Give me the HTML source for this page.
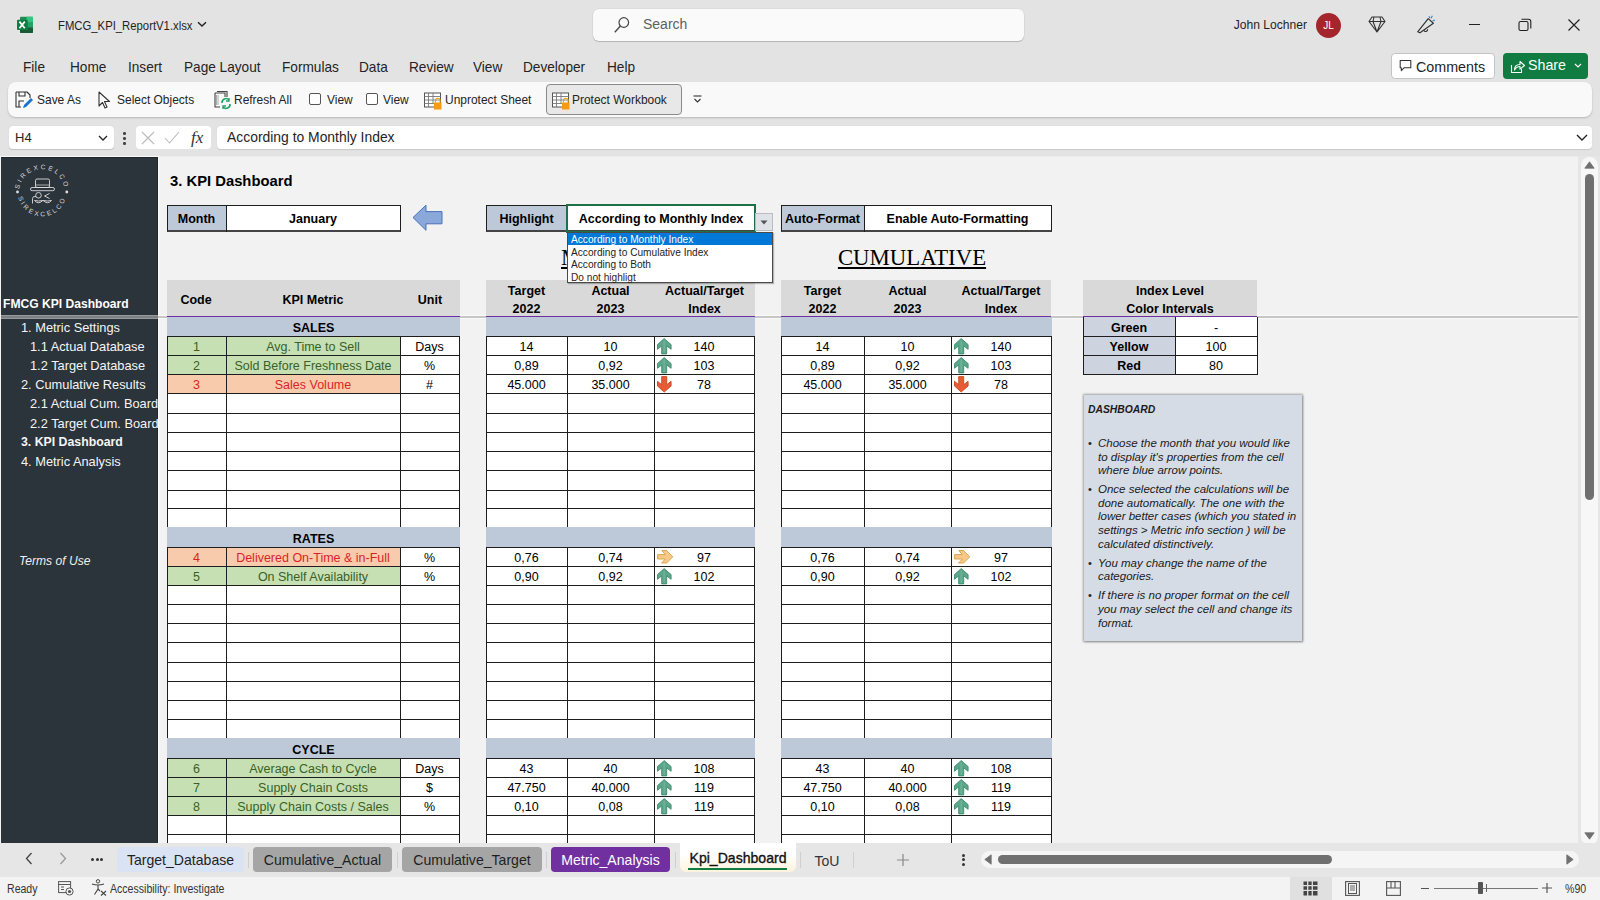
<!DOCTYPE html><html><head><meta charset="utf-8"><style>
*{margin:0;padding:0;box-sizing:border-box}
html,body{width:1600px;height:900px;overflow:hidden;background:#e3e3e3;font-family:"Liberation Sans",sans-serif;color:#1f1f1f}
.t{position:absolute;white-space:nowrap;overflow:visible}
svg{position:absolute;overflow:visible}
</style></head><body>
<svg style="left:16px;top:16px" width="18" height="18" viewBox="0 0 18 18">
<rect x="4" y="0.8" width="13" height="16.2" rx="1" fill="#1d8f55"/>
<rect x="10.5" y="0.8" width="6.5" height="5.6" fill="#33c481"/>
<rect x="10.5" y="6.4" width="6.5" height="5.2" fill="#21a366"/>
<rect x="4" y="11.6" width="13" height="5.4" rx="1" fill="#185c37"/>
<rect x="1" y="3.8" width="10.8" height="10.2" rx="1" fill="#107c41"/>
<path d="M3.4 5.6 L8.8 12.2 M8.8 5.6 L3.4 12.2" stroke="#fff" stroke-width="1.7"/>
</svg>
<div class="t" style="left:58px;top:16px;width:160px;height:20px;line-height:20px;text-align:left;font-size:13px;color:#1f1f1f;transform:scaleX(0.87);transform-origin:left">FMCG_KPI_ReportV1.xlsx</div>
<svg style="left:197px;top:21px" width="10" height="7" viewBox="0 0 10 7"><path d="M1 1.2 L5 5 L9 1.2" stroke="#222" stroke-width="1.4" fill="none"/></svg>
<div style="position:absolute;left:593px;top:9px;width:431px;height:32px;background:#fafafa;border-radius:6px;box-shadow:0 1px 1px rgba(0,0,0,0.18), 0 0 0 0.5px rgba(0,0,0,0.06)"></div>
<svg style="left:614px;top:16px" width="16" height="17" viewBox="0 0 16 17"><circle cx="9.8" cy="6.5" r="4.8" stroke="#444" stroke-width="1.2" fill="none"/><path d="M6.4 10 L0.8 16.2" stroke="#444" stroke-width="1.3"/></svg>
<div class="t" style="left:643px;top:14px;width:80px;height:20px;line-height:20px;text-align:left;font-size:14px;color:#5f5f5f">Search</div>
<div class="t" style="left:1200px;top:15px;width:107px;height:20px;line-height:20px;text-align:right;font-size:13px;color:#1f1f1f;transform:scaleX(0.93);transform-origin:right">John Lochner</div>
<div style="position:absolute;left:1316px;top:13px;width:25px;height:25px;border-radius:50%;background:#a4262c;color:#fff;font-size:10px;line-height:25px;text-align:center">JL</div>
<svg style="left:1368px;top:16px" width="18" height="17" viewBox="0 0 18 17"><path d="M4 1 H14 L17 5.5 L9 16 L1 5.5 Z M1 5.5 H17 M6 1 L5 5.5 L9 16 L13 5.5 L12 1" stroke="#333" stroke-width="1.1" fill="none" stroke-linejoin="round"/></svg>
<svg style="left:1415px;top:14px" width="22" height="22" viewBox="0 0 22 22">
<path d="M2.7 17.8 L13.2 4.6 L18.4 9.2 L5 18.8 Z" stroke="#333" stroke-width="1.2" fill="none" stroke-linejoin="round"/>
<path d="M8.8 16.3 A2 2 0 0 0 12.6 15.2" stroke="#333" stroke-width="1.1" fill="none"/>
<path d="M13.9 2.2 L15.1 4.2 M17.3 1.8 L16.2 4.3 M17.6 7 L19.8 6.1" stroke="#1b8ad6" stroke-width="1.1"/>
</svg>
<div style="position:absolute;left:1469px;top:24px;width:11px;height:1.2px;background:#222"></div>
<svg style="left:1518px;top:18px" width="14" height="14" viewBox="0 0 14 14"><rect x="1" y="3.5" width="9" height="9" rx="1.5" stroke="#222" stroke-width="1.1" fill="none"/><path d="M3.5 1.2 H10.5 Q12.8 1.2 12.8 3.5 V10.5" stroke="#222" stroke-width="1.1" fill="none"/></svg>
<svg style="left:1568px;top:19px" width="12" height="12" viewBox="0 0 12 12"><path d="M0.5 0.5 L11.5 11.5 M11.5 0.5 L0.5 11.5" stroke="#222" stroke-width="1.2"/></svg>
<div class="t" style="left:23px;top:57px;width:120px;height:20px;line-height:20px;text-align:left;font-size:14.5px;color:#242424;transform:scaleX(0.94);transform-origin:left">File</div>
<div class="t" style="left:70px;top:57px;width:120px;height:20px;line-height:20px;text-align:left;font-size:14.5px;color:#242424;transform:scaleX(0.94);transform-origin:left">Home</div>
<div class="t" style="left:128px;top:57px;width:120px;height:20px;line-height:20px;text-align:left;font-size:14.5px;color:#242424;transform:scaleX(0.94);transform-origin:left">Insert</div>
<div class="t" style="left:184px;top:57px;width:120px;height:20px;line-height:20px;text-align:left;font-size:14.5px;color:#242424;transform:scaleX(0.94);transform-origin:left">Page Layout</div>
<div class="t" style="left:282px;top:57px;width:120px;height:20px;line-height:20px;text-align:left;font-size:14.5px;color:#242424;transform:scaleX(0.94);transform-origin:left">Formulas</div>
<div class="t" style="left:359px;top:57px;width:120px;height:20px;line-height:20px;text-align:left;font-size:14.5px;color:#242424;transform:scaleX(0.94);transform-origin:left">Data</div>
<div class="t" style="left:409px;top:57px;width:120px;height:20px;line-height:20px;text-align:left;font-size:14.5px;color:#242424;transform:scaleX(0.94);transform-origin:left">Review</div>
<div class="t" style="left:473px;top:57px;width:120px;height:20px;line-height:20px;text-align:left;font-size:14.5px;color:#242424;transform:scaleX(0.94);transform-origin:left">View</div>
<div class="t" style="left:523px;top:57px;width:120px;height:20px;line-height:20px;text-align:left;font-size:14.5px;color:#242424;transform:scaleX(0.94);transform-origin:left">Developer</div>
<div class="t" style="left:607px;top:57px;width:120px;height:20px;line-height:20px;text-align:left;font-size:14.5px;color:#242424;transform:scaleX(0.94);transform-origin:left">Help</div>
<div style="position:absolute;left:1391px;top:53px;width:104px;height:26px;background:#fff;border:1px solid #c4c4c4;border-radius:4px"></div>
<svg style="left:1399px;top:59px" width="14" height="14" viewBox="0 0 14 14"><path d="M1.2 1.5 H11.8 V8.8 H5 L2.3 11.6 V8.8 H1.2 Z" stroke="#333" stroke-width="1.05" fill="none" stroke-linejoin="round"/></svg>
<div class="t" style="left:1416px;top:57px;width:80px;height:20px;line-height:20px;text-align:left;font-size:14.5px;color:#242424;transform:scaleX(0.985);transform-origin:left">Comments</div>
<div style="position:absolute;left:1503px;top:53px;width:85px;height:26px;background:#107c41;border-radius:4px"></div>
<svg style="left:1510px;top:58px" width="16" height="16" viewBox="0 0 16 16"><path d="M1.5 7 V14.5 H11.5 V11" stroke="#fff" stroke-width="1.1" fill="none"/><path d="M4.5 12 Q4.5 6.5 10 6.5 V3.5 L14.5 7.5 L10 11.2 V8.5 Q6.5 8.5 4.5 12 Z" stroke="#fff" stroke-width="1.1" fill="none" stroke-linejoin="round"/></svg>
<div class="t" style="left:1528px;top:55px;width:60px;height:20px;line-height:20px;text-align:left;font-size:15px;color:#fff;transform:scaleX(0.95);transform-origin:left">Share</div>
<svg style="left:1574px;top:63px" width="8" height="6" viewBox="0 0 8 6"><path d="M1 1 L4 4 L7 1" stroke="#fff" stroke-width="1.2" fill="none"/></svg>
<div style="position:absolute;left:8px;top:82px;width:1584px;height:35px;background:#f9f9f9;border-radius:8px;box-shadow:0 1px 2px rgba(0,0,0,0.2)"></div>
<svg style="left:15px;top:91px" width="19" height="18" viewBox="0 0 19 18">
<path d="M1 1 H12 L15 4 V7 M1 1 V16 H6" stroke="#333" stroke-width="1.1" fill="none" stroke-linejoin="round"/>
<path d="M4 1 V5 H10 V1 M4 16 V10 H9" stroke="#333" stroke-width="1.1" fill="none"/>
<path d="M8 17 L9 14 L16 7 L18 9 L11 16 Z" fill="#1a73d1"/>
</svg>
<div class="t" style="left:37px;top:90px;width:60px;height:20px;line-height:20px;text-align:left;font-size:13px;color:#242424;transform:scaleX(0.92);transform-origin:left">Save As</div>
<svg style="left:98px;top:91px" width="13" height="18" viewBox="0 0 13 18"><path d="M1 1 V15 L4.5 11.5 L7 17 L9 16 L6.5 10.5 H11.5 Z" stroke="#333" stroke-width="1.1" fill="none" stroke-linejoin="round"/></svg>
<div class="t" style="left:117px;top:90px;width:90px;height:20px;line-height:20px;text-align:left;font-size:13px;color:#242424;transform:scaleX(0.92);transform-origin:left">Select Objects</div>
<svg style="left:214px;top:91px" width="18" height="18" viewBox="0 0 18 18">
<path d="M1 2 V16 H6 M1 2 H11 V6 M3 0.5 H13 V6" stroke="#444" stroke-width="1.1" fill="none"/>
<path d="M2.5 4 V14 M4 4 V14" stroke="#999" stroke-width="0.8"/>
<path d="M8 12 A4 4 0 0 1 15 9 M16 13 A4 4 0 0 1 9 16" stroke="#21a366" stroke-width="1.6" fill="none"/>
<path d="M15 7 V10 H12 M9 18 V15 H12" stroke="#21a366" stroke-width="1.3" fill="none"/>
</svg>
<div class="t" style="left:234px;top:90px;width:70px;height:20px;line-height:20px;text-align:left;font-size:13px;color:#242424;transform:scaleX(0.92);transform-origin:left">Refresh All</div>
<div style="position:absolute;left:309px;top:93px;width:12px;height:12px;border:1px solid #555;border-radius:2px;background:#fff"></div>
<div class="t" style="left:327px;top:90px;width:40px;height:20px;line-height:20px;text-align:left;font-size:13px;color:#242424;transform:scaleX(0.92);transform-origin:left">View</div>
<div style="position:absolute;left:366px;top:93px;width:12px;height:12px;border:1px solid #555;border-radius:2px;background:#fff"></div>
<div class="t" style="left:383px;top:90px;width:40px;height:20px;line-height:20px;text-align:left;font-size:13px;color:#242424;transform:scaleX(0.92);transform-origin:left">View</div>
<svg style="left:424px;top:92px" width="18" height="18" viewBox="0 0 18 18">
<rect x="0.5" y="1" width="16" height="14" stroke="#555" stroke-width="1" fill="#fff"/>
<path d="M0.5 4.5 H16.5 M0.5 8 H16.5 M0.5 11.5 H10 M4.5 1 V15 M9 1 V11" stroke="#777" stroke-width="0.9"/>
<rect x="10" y="10.5" width="7.5" height="7" fill="#f39c12"/>
<path d="M11.5 10.5 V8.5 A2.2 2.2 0 0 1 16 8.5 V10.5" stroke="#f39c12" stroke-width="1.2" fill="none"/>
</svg>
<div class="t" style="left:445px;top:90px;width:110px;height:20px;line-height:20px;text-align:left;font-size:13px;color:#242424;transform:scaleX(0.92);transform-origin:left">Unprotect Sheet</div>
<div style="position:absolute;left:546px;top:84px;width:136px;height:31px;background:#e8e8e8;border:1px solid #8a8a8a;border-radius:4px"></div>
<svg style="left:552px;top:92px" width="18" height="18" viewBox="0 0 18 18">
<rect x="0.5" y="1" width="16" height="14" stroke="#555" stroke-width="1" fill="#fff"/>
<path d="M0.5 4.5 H16.5 M0.5 8 H16.5 M0.5 11.5 H10 M4.5 1 V15 M9 1 V11" stroke="#777" stroke-width="0.9"/>
<rect x="10" y="10.5" width="7.5" height="7" fill="#f39c12"/>
<path d="M11.5 10.5 V8.5 A2.2 2.2 0 0 1 16 8.5 V10.5" stroke="#f39c12" stroke-width="1.2" fill="none"/>
</svg>
<div class="t" style="left:572px;top:90px;width:110px;height:20px;line-height:20px;text-align:left;font-size:13px;color:#242424;transform:scaleX(0.92);transform-origin:left">Protect Workbook</div>
<svg style="left:693px;top:95px" width="9" height="10" viewBox="0 0 9 10"><path d="M0.5 1 H8.5" stroke="#333" stroke-width="1.1"/><path d="M1.5 4 L4.5 7 L7.5 4" stroke="#333" stroke-width="1.1" fill="none"/></svg>
<div style="position:absolute;left:9px;top:126px;width:105px;height:23px;background:#fff;border-radius:4px;box-shadow:0 0.5px 1px rgba(0,0,0,0.15)"></div>
<div class="t" style="left:15px;top:127px;width:40px;height:21px;line-height:21px;text-align:left;font-size:13px;color:#242424">H4</div>
<svg style="left:98px;top:135px" width="10" height="7" viewBox="0 0 10 7"><path d="M1 1 L5 5 L9 1" stroke="#222" stroke-width="1.3" fill="none"/></svg>
<div style="position:absolute;left:123px;top:132px;width:2.5px;height:2.5px;background:#444;border-radius:50%"></div>
<div style="position:absolute;left:123px;top:137px;width:2.5px;height:2.5px;background:#444;border-radius:50%"></div>
<div style="position:absolute;left:123px;top:142px;width:2.5px;height:2.5px;background:#444;border-radius:50%"></div>
<div style="position:absolute;left:136px;top:126px;width:75px;height:23px;background:#fff;border-radius:4px"></div>
<svg style="left:141px;top:131px" width="14" height="14" viewBox="0 0 14 14"><path d="M1 1 L13 13 M13 1 L1 13" stroke="#bbb" stroke-width="1.1"/></svg>
<svg style="left:164px;top:131px" width="16" height="13" viewBox="0 0 16 13"><path d="M1 7 L5.5 12 L15 1" stroke="#bbb" stroke-width="1.1" fill="none"/></svg>
<div class="t" style="left:191px;top:126px;width:20px;height:23px;line-height:23px;text-align:left;font-family:'Liberation Serif',serif;font-size:17px;color:#333"><i>fx</i></div>
<div style="position:absolute;left:217px;top:126px;width:1375px;height:23px;background:#fff;border-radius:4px;box-shadow:0 0.5px 1px rgba(0,0,0,0.12)"></div>
<div class="t" style="left:227px;top:127px;width:300px;height:21px;line-height:21px;text-align:left;font-size:13.9px;color:#242424">According to Monthly Index</div>
<svg style="left:1576px;top:134px" width="12" height="8" viewBox="0 0 12 8"><path d="M1 1 L6 6 L11 1" stroke="#222" stroke-width="1.4" fill="none"/></svg>
<div style="position:absolute;left:0px;top:156px;width:1578px;height:687px;background:#f2f2f2;border-top:1px solid #ececec"></div>
<div style="position:absolute;left:0px;top:156px;width:159px;height:1px;background:#fafafa"></div>
<div style="position:absolute;left:158px;top:157px;width:1px;height:686px;background:#fafafa"></div>
<div style="position:absolute;left:1px;top:157px;width:157px;height:686px;background:#2b333b;border-right:1px solid #1e252b;border-top:1px solid #1e252b"></div>
<svg style="left:13px;top:163px" width="58" height="58" viewBox="0 0 58 58">
<defs><path id="ct" d="M6.2 29 A22.8 22.8 0 0 1 51.8 29"/><path id="cb" d="M4.6 29 A24.4 24.4 0 0 0 53.4 29"/></defs>
<text font-family="Liberation Sans" font-size="6.6" fill="#dcdcdc" letter-spacing="2.3" text-anchor="middle"><textPath href="#ct" startOffset="50%">SIREXCELCO</textPath></text>
<text font-family="Liberation Sans" font-size="6.6" fill="#dcdcdc" letter-spacing="2.3" text-anchor="middle"><textPath href="#cb" startOffset="50%">SIREXCELCO</textPath></text>
<circle cx="4.5" cy="29" r="1.4" fill="#e0e0e0"/><circle cx="53.8" cy="29" r="1.4" fill="#e0e0e0"/>
<rect x="22.5" y="16" width="14" height="8.5" rx="1.5" stroke="#ddd" stroke-width="0.9" fill="none"/>
<path d="M23 22 H36" stroke="#ddd" stroke-width="0.7"/>
<rect x="17.5" y="24.5" width="24" height="3.2" rx="1.6" stroke="#ddd" stroke-width="0.9" fill="none"/>
<circle cx="25.5" cy="32.3" r="2.8" stroke="#ddd" stroke-width="0.9" fill="none"/>
<path d="M19.5 40.5 V35.5 Q19.5 33 23 33.5 M21.5 37.5 Q25.5 42 29.8 37.5 Q25.5 38.5 21.5 37.5 M30.2 37.5 Q34.5 42 38.5 37.5 Q34.5 38.5 30.2 37.5 M36.5 30.5 L31.5 33 L36.5 35.5" stroke="#ddd" stroke-width="0.9" fill="none"/>
</svg>
<div class="t" style="left:3px;top:295px;width:160px;height:19px;line-height:19px;text-align:left;color:#fff;font-size:12.1px;font-weight:bold">FMCG KPI Dashboard</div>
<div style="position:absolute;left:1px;top:317px;width:157px;height:19px;overflow:hidden">
<div class="t" style="left:20px;top:1px;width:200px;height:19px;line-height:19px;text-align:left;color:#f5f5f5;font-size:13px;transform:scaleX(0.985);transform-origin:left;">1. Metric Settings</div>
</div>
<div style="position:absolute;left:1px;top:336px;width:157px;height:19px;overflow:hidden">
<div class="t" style="left:29px;top:1px;width:200px;height:19px;line-height:19px;text-align:left;color:#f5f5f5;font-size:13px;transform:scaleX(0.985);transform-origin:left;">1.1 Actual Database</div>
</div>
<div style="position:absolute;left:1px;top:355px;width:157px;height:19px;overflow:hidden">
<div class="t" style="left:29px;top:1px;width:200px;height:19px;line-height:19px;text-align:left;color:#f5f5f5;font-size:13px;transform:scaleX(0.985);transform-origin:left;">1.2 Target Database</div>
</div>
<div style="position:absolute;left:1px;top:374px;width:157px;height:19px;overflow:hidden">
<div class="t" style="left:20px;top:1px;width:200px;height:19px;line-height:19px;text-align:left;color:#f5f5f5;font-size:13px;transform:scaleX(0.985);transform-origin:left;">2. Cumulative Results</div>
</div>
<div style="position:absolute;left:1px;top:393px;width:157px;height:20px;overflow:hidden">
<div class="t" style="left:29px;top:1px;width:200px;height:20px;line-height:20px;text-align:left;color:#f5f5f5;font-size:13px;transform:scaleX(0.985);transform-origin:left;">2.1 Actual Cum. Board</div>
</div>
<div style="position:absolute;left:1px;top:413px;width:157px;height:19px;overflow:hidden">
<div class="t" style="left:29px;top:1px;width:200px;height:19px;line-height:19px;text-align:left;color:#f5f5f5;font-size:13px;transform:scaleX(0.985);transform-origin:left;">2.2 Target Cum. Board</div>
</div>
<div style="position:absolute;left:1px;top:432px;width:157px;height:19px;overflow:hidden">
<div class="t" style="left:20px;top:1px;width:200px;height:19px;line-height:19px;text-align:left;color:#f5f5f5;font-size:13px;font-weight:bold;font-size:12.3px;">3. KPI Dashboard</div>
</div>
<div style="position:absolute;left:1px;top:451px;width:157px;height:19px;overflow:hidden">
<div class="t" style="left:20px;top:1px;width:200px;height:19px;line-height:19px;text-align:left;color:#f5f5f5;font-size:13px;transform:scaleX(0.985);transform-origin:left;">4. Metric Analysis</div>
</div>
<div class="t" style="left:19px;top:551px;width:120px;height:19px;line-height:19px;text-align:left;color:#f0f0f0;font-size:13px;transform:scaleX(0.93);transform-origin:left"><i>Terms of Use</i></div>
<div style="position:absolute;left:1px;top:315px;width:1577px;height:4px;border-top:1px solid rgba(255,255,255,0.5);border-bottom:1px solid rgba(255,255,255,0.5);background:rgba(173,173,173,0.64);background-clip:padding-box"></div>
<div class="t" style="left:170px;top:171px;width:200px;height:20px;line-height:20px;text-align:left;font-size:14.8px;font-weight:bold;color:#000">3. KPI Dashboard</div>
<div style="position:absolute;left:167px;top:205px;width:59px;height:27px;background:#bdc8d8"></div>
<div style="position:absolute;left:226px;top:205px;width:174px;height:27px;background:#fff"></div>
<div style="position:absolute;left:167px;top:205px;width:234px;height:27px;border:1px solid #1e1e1e;border-bottom:2px solid #444"></div>
<div style="position:absolute;left:226px;top:205px;width:1px;height:27px;background:#1e1e1e"></div>
<div class="t" style="left:167px;top:207px;width:59px;height:25px;line-height:25px;text-align:center;font-size:12.5px;font-weight:bold;color:#000;">Month</div>
<div class="t" style="left:226px;top:207px;width:174px;height:25px;line-height:25px;text-align:center;font-size:12.5px;font-weight:bold;color:#000;">January</div>
<svg style="left:412px;top:204px" width="32" height="28" viewBox="0 0 32 28"><path d="M1 13.5 L14 1.2 L14 7.6 L30 7.6 L30 19.8 L14 19.8 L14 26.3 Z" fill="#8aa8da" stroke="#4a70b8" stroke-width="1"/></svg>
<div style="position:absolute;left:486px;top:205px;width:81px;height:27px;background:#bdc8d8"></div>
<div style="position:absolute;left:567px;top:205px;width:188px;height:27px;background:#fff"></div>
<div style="position:absolute;left:486px;top:205px;width:270px;height:27px;border:1px solid #1e1e1e;border-bottom:2px solid #444"></div>
<div style="position:absolute;left:567px;top:205px;width:1px;height:27px;background:#1e1e1e"></div>
<div class="t" style="left:486px;top:207px;width:81px;height:25px;line-height:25px;text-align:center;font-size:12.5px;font-weight:bold;color:#000;">Highlight</div>
<div class="t" style="left:567px;top:207px;width:188px;height:25px;line-height:25px;text-align:center;font-size:12.5px;font-weight:bold;color:#000;">According to Monthly Index</div>
<div style="position:absolute;left:781px;top:205px;width:83px;height:27px;background:#bdc8d8"></div>
<div style="position:absolute;left:864px;top:205px;width:187px;height:27px;background:#fff"></div>
<div style="position:absolute;left:781px;top:205px;width:271px;height:27px;border:1px solid #1e1e1e;border-bottom:2px solid #444"></div>
<div style="position:absolute;left:864px;top:205px;width:1px;height:27px;background:#1e1e1e"></div>
<div class="t" style="left:781px;top:207px;width:83px;height:25px;line-height:25px;text-align:center;font-size:12.5px;font-weight:bold;color:#000;">Auto-Format</div>
<div class="t" style="left:864px;top:207px;width:187px;height:25px;line-height:25px;text-align:center;font-size:12.5px;font-weight:bold;color:#000;">Enable Auto-Formatting</div>
<div style="position:absolute;left:566px;top:204px;width:190px;height:29px;border:2px solid #1e7145"></div>
<div class="t" style="left:561px;top:244px;width:269px;height:28px;line-height:28px;text-align:left;font-family:'Liberation Serif',serif;font-size:22.8px;color:#000"><u>MONTHLY</u></div>
<div class="t" style="left:777px;top:244px;width:270px;height:28px;line-height:28px;text-align:center;font-family:'Liberation Serif',serif;font-size:22.8px;color:#000"><u>CUMULATIVE</u></div>
<div style="position:absolute;left:167px;top:280px;width:293px;height:36px;background:#d9d9d9"></div>
<div style="position:absolute;left:167px;top:316px;width:293px;height:1.4px;background:#7030a0"></div>
<div style="position:absolute;left:486px;top:280px;width:269px;height:36px;background:#d9d9d9"></div>
<div style="position:absolute;left:486px;top:316px;width:269px;height:1.4px;background:#7030a0"></div>
<div style="position:absolute;left:781px;top:280px;width:270px;height:36px;background:#d9d9d9"></div>
<div style="position:absolute;left:781px;top:316px;width:270px;height:1.4px;background:#7030a0"></div>
<div style="position:absolute;left:1083px;top:280px;width:174px;height:36px;background:#d9d9d9"></div>
<div style="position:absolute;left:1083px;top:316px;width:174px;height:1.4px;background:#7030a0"></div>
<div class="t" style="left:136px;top:290px;width:120px;height:20px;line-height:20px;text-align:center;font-size:12.5px;font-weight:bold;color:#000;">Code</div>
<div class="t" style="left:253px;top:290px;width:120px;height:20px;line-height:20px;text-align:center;font-size:12.5px;font-weight:bold;color:#000;">KPI Metric</div>
<div class="t" style="left:370px;top:290px;width:120px;height:20px;line-height:20px;text-align:center;font-size:12.5px;font-weight:bold;color:#000;">Unit</div>
<div class="t" style="left:486px;top:282px;width:81px;height:18px;line-height:18px;text-align:center;font-size:12.5px;font-weight:bold;color:#000;">Target</div>
<div class="t" style="left:486px;top:300px;width:81px;height:18px;line-height:18px;text-align:center;font-size:12.5px;font-weight:bold;color:#000;">2022</div>
<div class="t" style="left:567px;top:282px;width:87px;height:18px;line-height:18px;text-align:center;font-size:12.5px;font-weight:bold;color:#000;">Actual</div>
<div class="t" style="left:567px;top:300px;width:87px;height:18px;line-height:18px;text-align:center;font-size:12.5px;font-weight:bold;color:#000;">2023</div>
<div class="t" style="left:654px;top:282px;width:101px;height:18px;line-height:18px;text-align:center;font-size:12.5px;font-weight:bold;color:#000;">Actual/Target</div>
<div class="t" style="left:654px;top:300px;width:101px;height:18px;line-height:18px;text-align:center;font-size:12.5px;font-weight:bold;color:#000;">Index</div>
<div class="t" style="left:781px;top:282px;width:83px;height:18px;line-height:18px;text-align:center;font-size:12.5px;font-weight:bold;color:#000;">Target</div>
<div class="t" style="left:781px;top:300px;width:83px;height:18px;line-height:18px;text-align:center;font-size:12.5px;font-weight:bold;color:#000;">2022</div>
<div class="t" style="left:864px;top:282px;width:87px;height:18px;line-height:18px;text-align:center;font-size:12.5px;font-weight:bold;color:#000;">Actual</div>
<div class="t" style="left:864px;top:300px;width:87px;height:18px;line-height:18px;text-align:center;font-size:12.5px;font-weight:bold;color:#000;">2023</div>
<div class="t" style="left:951px;top:282px;width:100px;height:18px;line-height:18px;text-align:center;font-size:12.5px;font-weight:bold;color:#000;">Actual/Target</div>
<div class="t" style="left:951px;top:300px;width:100px;height:18px;line-height:18px;text-align:center;font-size:12.5px;font-weight:bold;color:#000;">Index</div>
<div class="t" style="left:1083px;top:282px;width:174px;height:18px;line-height:18px;text-align:center;font-size:12.5px;font-weight:bold;color:#000;">Index Level</div>
<div class="t" style="left:1083px;top:300px;width:174px;height:18px;line-height:18px;text-align:center;font-size:12.5px;font-weight:bold;color:#000;">Color Intervals</div>
<div style="position:absolute;left:167px;top:317px;width:293px;height:19px;background:#bdc8d8"></div>
<div style="position:absolute;left:486px;top:317px;width:269px;height:19px;background:#bdc8d8"></div>
<div style="position:absolute;left:781px;top:317px;width:271px;height:19px;background:#bdc8d8"></div>
<div class="t" style="left:167px;top:319px;width:293px;height:19px;line-height:19px;text-align:center;font-size:12.5px;font-weight:bold;color:#000;">SALES</div>
<div style="position:absolute;left:167px;top:336px;width:293px;height:191px;background:#fff"></div>
<div style="position:absolute;left:167px;top:336px;width:233px;height:19px;background:#c6e0b4"></div>
<div class="t" style="left:167px;top:338px;width:59px;height:19px;line-height:19px;text-align:center;font-size:12.5px;color:#3b5f25">1</div>
<div class="t" style="left:226px;top:338px;width:174px;height:19px;line-height:19px;text-align:center;font-size:12.5px;color:#3b5f25">Avg. Time to Sell</div>
<div class="t" style="left:400px;top:338px;width:59px;height:19px;line-height:19px;text-align:center;font-size:12.5px;color:#000">Days</div>
<div style="position:absolute;left:167px;top:355px;width:233px;height:19px;background:#c6e0b4"></div>
<div class="t" style="left:167px;top:357px;width:59px;height:19px;line-height:19px;text-align:center;font-size:12.5px;color:#3b5f25">2</div>
<div class="t" style="left:226px;top:357px;width:174px;height:19px;line-height:19px;text-align:center;font-size:12.5px;color:#3b5f25">Sold Before Freshness Date</div>
<div class="t" style="left:400px;top:357px;width:59px;height:19px;line-height:19px;text-align:center;font-size:12.5px;color:#000">%</div>
<div style="position:absolute;left:167px;top:374px;width:233px;height:19px;background:#f8cbad"></div>
<div class="t" style="left:167px;top:376px;width:59px;height:19px;line-height:19px;text-align:center;font-size:12.5px;color:#dc1f26">3</div>
<div class="t" style="left:226px;top:376px;width:174px;height:19px;line-height:19px;text-align:center;font-size:12.5px;color:#dc1f26">Sales Volume</div>
<div class="t" style="left:400px;top:376px;width:59px;height:19px;line-height:19px;text-align:center;font-size:12.5px;color:#000">#</div>
<div style="position:absolute;left:167px;top:336px;width:293px;height:1px;background:#1e1e1e"></div>
<div style="position:absolute;left:167px;top:355px;width:293px;height:1px;background:#1e1e1e"></div>
<div style="position:absolute;left:167px;top:374px;width:293px;height:1px;background:#1e1e1e"></div>
<div style="position:absolute;left:167px;top:393px;width:293px;height:1px;background:#1e1e1e"></div>
<div style="position:absolute;left:167px;top:413px;width:293px;height:1px;background:#1e1e1e"></div>
<div style="position:absolute;left:167px;top:432px;width:293px;height:1px;background:#1e1e1e"></div>
<div style="position:absolute;left:167px;top:451px;width:293px;height:1px;background:#1e1e1e"></div>
<div style="position:absolute;left:167px;top:470px;width:293px;height:1px;background:#1e1e1e"></div>
<div style="position:absolute;left:167px;top:490px;width:293px;height:1px;background:#1e1e1e"></div>
<div style="position:absolute;left:167px;top:508px;width:293px;height:1px;background:#1e1e1e"></div>
<div style="position:absolute;left:167px;top:527px;width:293px;height:1.4px;background:#7030a0"></div>
<div style="position:absolute;left:167px;top:336px;width:1px;height:191px;background:#1e1e1e"></div>
<div style="position:absolute;left:226px;top:336px;width:1px;height:191px;background:#1e1e1e"></div>
<div style="position:absolute;left:400px;top:336px;width:1px;height:191px;background:#1e1e1e"></div>
<div style="position:absolute;left:459px;top:336px;width:1px;height:191px;background:#1e1e1e"></div>
<div style="position:absolute;left:486px;top:336px;width:269px;height:191px;background:#fff"></div>
<div class="t" style="left:486px;top:338px;width:81px;height:19px;line-height:19px;text-align:center;font-size:12.5px;color:#000">14</div>
<div class="t" style="left:567px;top:338px;width:87px;height:19px;line-height:19px;text-align:center;font-size:12.5px;color:#000">10</div>
<div class="t" style="left:654px;top:338px;width:100px;height:19px;line-height:19px;text-align:center;font-size:12.5px;color:#000">140</div>
<svg style="left:657px;top:338px" width="15" height="17" viewBox="0 0 15 17"><path d="M7.2 0.6 L14.1 6.6 L14.1 11.3 L9.7 7.9 L9.7 15.9 L4.7 15.9 L4.7 7.9 L0.5 11.3 L0.5 6.6 Z" fill="#5da68c" stroke="#3d8c70" stroke-width="0.9" stroke-linejoin="round"/><path d="M7.2 2.5 V15" stroke="#7cc0a6" stroke-width="1.2" opacity="0.6"/></svg>
<div class="t" style="left:486px;top:357px;width:81px;height:19px;line-height:19px;text-align:center;font-size:12.5px;color:#000">0,89</div>
<div class="t" style="left:567px;top:357px;width:87px;height:19px;line-height:19px;text-align:center;font-size:12.5px;color:#000">0,92</div>
<div class="t" style="left:654px;top:357px;width:100px;height:19px;line-height:19px;text-align:center;font-size:12.5px;color:#000">103</div>
<svg style="left:657px;top:357px" width="15" height="17" viewBox="0 0 15 17"><path d="M7.2 0.6 L14.1 6.6 L14.1 11.3 L9.7 7.9 L9.7 15.9 L4.7 15.9 L4.7 7.9 L0.5 11.3 L0.5 6.6 Z" fill="#5da68c" stroke="#3d8c70" stroke-width="0.9" stroke-linejoin="round"/><path d="M7.2 2.5 V15" stroke="#7cc0a6" stroke-width="1.2" opacity="0.6"/></svg>
<div class="t" style="left:486px;top:376px;width:81px;height:19px;line-height:19px;text-align:center;font-size:12.5px;color:#000">45.000</div>
<div class="t" style="left:567px;top:376px;width:87px;height:19px;line-height:19px;text-align:center;font-size:12.5px;color:#000">35.000</div>
<div class="t" style="left:654px;top:376px;width:100px;height:19px;line-height:19px;text-align:center;font-size:12.5px;color:#000">78</div>
<svg style="left:657px;top:376px" width="15" height="17" viewBox="0 0 15 17"><path d="M7.2 16 L14.1 10 L14.1 5.3 L9.7 8.7 L9.7 0.6 L4.7 0.6 L4.7 8.7 L0.5 5.3 L0.5 10 Z" fill="#e65c35" stroke="#cc4520" stroke-width="0.9" stroke-linejoin="round"/></svg>
<div style="position:absolute;left:486px;top:336px;width:269px;height:1px;background:#1e1e1e"></div>
<div style="position:absolute;left:486px;top:355px;width:269px;height:1px;background:#1e1e1e"></div>
<div style="position:absolute;left:486px;top:374px;width:269px;height:1px;background:#1e1e1e"></div>
<div style="position:absolute;left:486px;top:393px;width:269px;height:1px;background:#1e1e1e"></div>
<div style="position:absolute;left:486px;top:413px;width:269px;height:1px;background:#1e1e1e"></div>
<div style="position:absolute;left:486px;top:432px;width:269px;height:1px;background:#1e1e1e"></div>
<div style="position:absolute;left:486px;top:451px;width:269px;height:1px;background:#1e1e1e"></div>
<div style="position:absolute;left:486px;top:470px;width:269px;height:1px;background:#1e1e1e"></div>
<div style="position:absolute;left:486px;top:490px;width:269px;height:1px;background:#1e1e1e"></div>
<div style="position:absolute;left:486px;top:508px;width:269px;height:1px;background:#1e1e1e"></div>
<div style="position:absolute;left:486px;top:527px;width:269px;height:1.4px;background:#7030a0"></div>
<div style="position:absolute;left:486px;top:336px;width:1px;height:191px;background:#1e1e1e"></div>
<div style="position:absolute;left:567px;top:336px;width:1px;height:191px;background:#1e1e1e"></div>
<div style="position:absolute;left:654px;top:336px;width:1px;height:191px;background:#1e1e1e"></div>
<div style="position:absolute;left:754px;top:336px;width:1px;height:191px;background:#1e1e1e"></div>
<div style="position:absolute;left:781px;top:336px;width:271px;height:191px;background:#fff"></div>
<div class="t" style="left:781px;top:338px;width:83px;height:19px;line-height:19px;text-align:center;font-size:12.5px;color:#000">14</div>
<div class="t" style="left:864px;top:338px;width:87px;height:19px;line-height:19px;text-align:center;font-size:12.5px;color:#000">10</div>
<div class="t" style="left:951px;top:338px;width:100px;height:19px;line-height:19px;text-align:center;font-size:12.5px;color:#000">140</div>
<svg style="left:954px;top:338px" width="15" height="17" viewBox="0 0 15 17"><path d="M7.2 0.6 L14.1 6.6 L14.1 11.3 L9.7 7.9 L9.7 15.9 L4.7 15.9 L4.7 7.9 L0.5 11.3 L0.5 6.6 Z" fill="#5da68c" stroke="#3d8c70" stroke-width="0.9" stroke-linejoin="round"/><path d="M7.2 2.5 V15" stroke="#7cc0a6" stroke-width="1.2" opacity="0.6"/></svg>
<div class="t" style="left:781px;top:357px;width:83px;height:19px;line-height:19px;text-align:center;font-size:12.5px;color:#000">0,89</div>
<div class="t" style="left:864px;top:357px;width:87px;height:19px;line-height:19px;text-align:center;font-size:12.5px;color:#000">0,92</div>
<div class="t" style="left:951px;top:357px;width:100px;height:19px;line-height:19px;text-align:center;font-size:12.5px;color:#000">103</div>
<svg style="left:954px;top:357px" width="15" height="17" viewBox="0 0 15 17"><path d="M7.2 0.6 L14.1 6.6 L14.1 11.3 L9.7 7.9 L9.7 15.9 L4.7 15.9 L4.7 7.9 L0.5 11.3 L0.5 6.6 Z" fill="#5da68c" stroke="#3d8c70" stroke-width="0.9" stroke-linejoin="round"/><path d="M7.2 2.5 V15" stroke="#7cc0a6" stroke-width="1.2" opacity="0.6"/></svg>
<div class="t" style="left:781px;top:376px;width:83px;height:19px;line-height:19px;text-align:center;font-size:12.5px;color:#000">45.000</div>
<div class="t" style="left:864px;top:376px;width:87px;height:19px;line-height:19px;text-align:center;font-size:12.5px;color:#000">35.000</div>
<div class="t" style="left:951px;top:376px;width:100px;height:19px;line-height:19px;text-align:center;font-size:12.5px;color:#000">78</div>
<svg style="left:954px;top:376px" width="15" height="17" viewBox="0 0 15 17"><path d="M7.2 16 L14.1 10 L14.1 5.3 L9.7 8.7 L9.7 0.6 L4.7 0.6 L4.7 8.7 L0.5 5.3 L0.5 10 Z" fill="#e65c35" stroke="#cc4520" stroke-width="0.9" stroke-linejoin="round"/></svg>
<div style="position:absolute;left:781px;top:336px;width:271px;height:1px;background:#1e1e1e"></div>
<div style="position:absolute;left:781px;top:355px;width:271px;height:1px;background:#1e1e1e"></div>
<div style="position:absolute;left:781px;top:374px;width:271px;height:1px;background:#1e1e1e"></div>
<div style="position:absolute;left:781px;top:393px;width:271px;height:1px;background:#1e1e1e"></div>
<div style="position:absolute;left:781px;top:413px;width:271px;height:1px;background:#1e1e1e"></div>
<div style="position:absolute;left:781px;top:432px;width:271px;height:1px;background:#1e1e1e"></div>
<div style="position:absolute;left:781px;top:451px;width:271px;height:1px;background:#1e1e1e"></div>
<div style="position:absolute;left:781px;top:470px;width:271px;height:1px;background:#1e1e1e"></div>
<div style="position:absolute;left:781px;top:490px;width:271px;height:1px;background:#1e1e1e"></div>
<div style="position:absolute;left:781px;top:508px;width:271px;height:1px;background:#1e1e1e"></div>
<div style="position:absolute;left:781px;top:527px;width:271px;height:1.4px;background:#7030a0"></div>
<div style="position:absolute;left:781px;top:336px;width:1px;height:191px;background:#1e1e1e"></div>
<div style="position:absolute;left:864px;top:336px;width:1px;height:191px;background:#1e1e1e"></div>
<div style="position:absolute;left:951px;top:336px;width:1px;height:191px;background:#1e1e1e"></div>
<div style="position:absolute;left:1051px;top:336px;width:1px;height:191px;background:#1e1e1e"></div>
<div style="position:absolute;left:167px;top:527px;width:293px;height:20px;background:#bdc8d8"></div>
<div style="position:absolute;left:486px;top:527px;width:269px;height:20px;background:#bdc8d8"></div>
<div style="position:absolute;left:781px;top:527px;width:271px;height:20px;background:#bdc8d8"></div>
<div class="t" style="left:167px;top:529px;width:293px;height:20px;line-height:20px;text-align:center;font-size:12.5px;font-weight:bold;color:#000;">RATES</div>
<div style="position:absolute;left:167px;top:547px;width:293px;height:191px;background:#fff"></div>
<div style="position:absolute;left:167px;top:547px;width:233px;height:19px;background:#f8cbad"></div>
<div class="t" style="left:167px;top:549px;width:59px;height:19px;line-height:19px;text-align:center;font-size:12.5px;color:#dc1f26">4</div>
<div class="t" style="left:226px;top:549px;width:174px;height:19px;line-height:19px;text-align:center;font-size:12.5px;color:#dc1f26">Delivered On-Time &amp; in-Full</div>
<div class="t" style="left:400px;top:549px;width:59px;height:19px;line-height:19px;text-align:center;font-size:12.5px;color:#000">%</div>
<div style="position:absolute;left:167px;top:566px;width:233px;height:19px;background:#c6e0b4"></div>
<div class="t" style="left:167px;top:568px;width:59px;height:19px;line-height:19px;text-align:center;font-size:12.5px;color:#3b5f25">5</div>
<div class="t" style="left:226px;top:568px;width:174px;height:19px;line-height:19px;text-align:center;font-size:12.5px;color:#3b5f25">On Shelf Availability</div>
<div class="t" style="left:400px;top:568px;width:59px;height:19px;line-height:19px;text-align:center;font-size:12.5px;color:#000">%</div>
<div style="position:absolute;left:167px;top:547px;width:293px;height:1px;background:#1e1e1e"></div>
<div style="position:absolute;left:167px;top:566px;width:293px;height:1px;background:#1e1e1e"></div>
<div style="position:absolute;left:167px;top:585px;width:293px;height:1px;background:#1e1e1e"></div>
<div style="position:absolute;left:167px;top:604px;width:293px;height:1px;background:#1e1e1e"></div>
<div style="position:absolute;left:167px;top:623px;width:293px;height:1px;background:#1e1e1e"></div>
<div style="position:absolute;left:167px;top:642px;width:293px;height:1px;background:#1e1e1e"></div>
<div style="position:absolute;left:167px;top:662px;width:293px;height:1px;background:#1e1e1e"></div>
<div style="position:absolute;left:167px;top:681px;width:293px;height:1px;background:#1e1e1e"></div>
<div style="position:absolute;left:167px;top:700px;width:293px;height:1px;background:#1e1e1e"></div>
<div style="position:absolute;left:167px;top:719px;width:293px;height:1px;background:#1e1e1e"></div>
<div style="position:absolute;left:167px;top:738px;width:293px;height:1.4px;background:#7030a0"></div>
<div style="position:absolute;left:167px;top:547px;width:1px;height:191px;background:#1e1e1e"></div>
<div style="position:absolute;left:226px;top:547px;width:1px;height:191px;background:#1e1e1e"></div>
<div style="position:absolute;left:400px;top:547px;width:1px;height:191px;background:#1e1e1e"></div>
<div style="position:absolute;left:459px;top:547px;width:1px;height:191px;background:#1e1e1e"></div>
<div style="position:absolute;left:486px;top:547px;width:269px;height:191px;background:#fff"></div>
<div class="t" style="left:486px;top:549px;width:81px;height:19px;line-height:19px;text-align:center;font-size:12.5px;color:#000">0,76</div>
<div class="t" style="left:567px;top:549px;width:87px;height:19px;line-height:19px;text-align:center;font-size:12.5px;color:#000">0,74</div>
<div class="t" style="left:654px;top:549px;width:100px;height:19px;line-height:19px;text-align:center;font-size:12.5px;color:#000">97</div>
<svg style="left:657px;top:550px" width="17" height="15" viewBox="0 0 17 15"><path d="M15.8 6.8 L9.6 0.6 L4.8 0.6 L8.3 4.6 L0.6 4.6 L0.6 9 L8.3 9 L4.5 13 L9.6 13 Z" fill="#f6c98b" stroke="#d9a03e" stroke-width="0.9" stroke-linejoin="round"/></svg>
<div class="t" style="left:486px;top:568px;width:81px;height:19px;line-height:19px;text-align:center;font-size:12.5px;color:#000">0,90</div>
<div class="t" style="left:567px;top:568px;width:87px;height:19px;line-height:19px;text-align:center;font-size:12.5px;color:#000">0,92</div>
<div class="t" style="left:654px;top:568px;width:100px;height:19px;line-height:19px;text-align:center;font-size:12.5px;color:#000">102</div>
<svg style="left:657px;top:568px" width="15" height="17" viewBox="0 0 15 17"><path d="M7.2 0.6 L14.1 6.6 L14.1 11.3 L9.7 7.9 L9.7 15.9 L4.7 15.9 L4.7 7.9 L0.5 11.3 L0.5 6.6 Z" fill="#5da68c" stroke="#3d8c70" stroke-width="0.9" stroke-linejoin="round"/><path d="M7.2 2.5 V15" stroke="#7cc0a6" stroke-width="1.2" opacity="0.6"/></svg>
<div style="position:absolute;left:486px;top:547px;width:269px;height:1px;background:#1e1e1e"></div>
<div style="position:absolute;left:486px;top:566px;width:269px;height:1px;background:#1e1e1e"></div>
<div style="position:absolute;left:486px;top:585px;width:269px;height:1px;background:#1e1e1e"></div>
<div style="position:absolute;left:486px;top:604px;width:269px;height:1px;background:#1e1e1e"></div>
<div style="position:absolute;left:486px;top:623px;width:269px;height:1px;background:#1e1e1e"></div>
<div style="position:absolute;left:486px;top:642px;width:269px;height:1px;background:#1e1e1e"></div>
<div style="position:absolute;left:486px;top:662px;width:269px;height:1px;background:#1e1e1e"></div>
<div style="position:absolute;left:486px;top:681px;width:269px;height:1px;background:#1e1e1e"></div>
<div style="position:absolute;left:486px;top:700px;width:269px;height:1px;background:#1e1e1e"></div>
<div style="position:absolute;left:486px;top:719px;width:269px;height:1px;background:#1e1e1e"></div>
<div style="position:absolute;left:486px;top:738px;width:269px;height:1.4px;background:#7030a0"></div>
<div style="position:absolute;left:486px;top:547px;width:1px;height:191px;background:#1e1e1e"></div>
<div style="position:absolute;left:567px;top:547px;width:1px;height:191px;background:#1e1e1e"></div>
<div style="position:absolute;left:654px;top:547px;width:1px;height:191px;background:#1e1e1e"></div>
<div style="position:absolute;left:754px;top:547px;width:1px;height:191px;background:#1e1e1e"></div>
<div style="position:absolute;left:781px;top:547px;width:271px;height:191px;background:#fff"></div>
<div class="t" style="left:781px;top:549px;width:83px;height:19px;line-height:19px;text-align:center;font-size:12.5px;color:#000">0,76</div>
<div class="t" style="left:864px;top:549px;width:87px;height:19px;line-height:19px;text-align:center;font-size:12.5px;color:#000">0,74</div>
<div class="t" style="left:951px;top:549px;width:100px;height:19px;line-height:19px;text-align:center;font-size:12.5px;color:#000">97</div>
<svg style="left:954px;top:550px" width="17" height="15" viewBox="0 0 17 15"><path d="M15.8 6.8 L9.6 0.6 L4.8 0.6 L8.3 4.6 L0.6 4.6 L0.6 9 L8.3 9 L4.5 13 L9.6 13 Z" fill="#f6c98b" stroke="#d9a03e" stroke-width="0.9" stroke-linejoin="round"/></svg>
<div class="t" style="left:781px;top:568px;width:83px;height:19px;line-height:19px;text-align:center;font-size:12.5px;color:#000">0,90</div>
<div class="t" style="left:864px;top:568px;width:87px;height:19px;line-height:19px;text-align:center;font-size:12.5px;color:#000">0,92</div>
<div class="t" style="left:951px;top:568px;width:100px;height:19px;line-height:19px;text-align:center;font-size:12.5px;color:#000">102</div>
<svg style="left:954px;top:568px" width="15" height="17" viewBox="0 0 15 17"><path d="M7.2 0.6 L14.1 6.6 L14.1 11.3 L9.7 7.9 L9.7 15.9 L4.7 15.9 L4.7 7.9 L0.5 11.3 L0.5 6.6 Z" fill="#5da68c" stroke="#3d8c70" stroke-width="0.9" stroke-linejoin="round"/><path d="M7.2 2.5 V15" stroke="#7cc0a6" stroke-width="1.2" opacity="0.6"/></svg>
<div style="position:absolute;left:781px;top:547px;width:271px;height:1px;background:#1e1e1e"></div>
<div style="position:absolute;left:781px;top:566px;width:271px;height:1px;background:#1e1e1e"></div>
<div style="position:absolute;left:781px;top:585px;width:271px;height:1px;background:#1e1e1e"></div>
<div style="position:absolute;left:781px;top:604px;width:271px;height:1px;background:#1e1e1e"></div>
<div style="position:absolute;left:781px;top:623px;width:271px;height:1px;background:#1e1e1e"></div>
<div style="position:absolute;left:781px;top:642px;width:271px;height:1px;background:#1e1e1e"></div>
<div style="position:absolute;left:781px;top:662px;width:271px;height:1px;background:#1e1e1e"></div>
<div style="position:absolute;left:781px;top:681px;width:271px;height:1px;background:#1e1e1e"></div>
<div style="position:absolute;left:781px;top:700px;width:271px;height:1px;background:#1e1e1e"></div>
<div style="position:absolute;left:781px;top:719px;width:271px;height:1px;background:#1e1e1e"></div>
<div style="position:absolute;left:781px;top:738px;width:271px;height:1.4px;background:#7030a0"></div>
<div style="position:absolute;left:781px;top:547px;width:1px;height:191px;background:#1e1e1e"></div>
<div style="position:absolute;left:864px;top:547px;width:1px;height:191px;background:#1e1e1e"></div>
<div style="position:absolute;left:951px;top:547px;width:1px;height:191px;background:#1e1e1e"></div>
<div style="position:absolute;left:1051px;top:547px;width:1px;height:191px;background:#1e1e1e"></div>
<div style="position:absolute;left:167px;top:738px;width:293px;height:20px;background:#bdc8d8"></div>
<div style="position:absolute;left:486px;top:738px;width:269px;height:20px;background:#bdc8d8"></div>
<div style="position:absolute;left:781px;top:738px;width:271px;height:20px;background:#bdc8d8"></div>
<div class="t" style="left:167px;top:740px;width:293px;height:20px;line-height:20px;text-align:center;font-size:12.5px;font-weight:bold;color:#000;">CYCLE</div>
<div style="position:absolute;left:167px;top:758px;width:293px;height:85px;background:#fff"></div>
<div style="position:absolute;left:167px;top:758px;width:233px;height:19px;background:#c6e0b4"></div>
<div class="t" style="left:167px;top:760px;width:59px;height:19px;line-height:19px;text-align:center;font-size:12.5px;color:#3b5f25">6</div>
<div class="t" style="left:226px;top:760px;width:174px;height:19px;line-height:19px;text-align:center;font-size:12.5px;color:#3b5f25">Average Cash to Cycle</div>
<div class="t" style="left:400px;top:760px;width:59px;height:19px;line-height:19px;text-align:center;font-size:12.5px;color:#000">Days</div>
<div style="position:absolute;left:167px;top:777px;width:233px;height:19px;background:#c6e0b4"></div>
<div class="t" style="left:167px;top:779px;width:59px;height:19px;line-height:19px;text-align:center;font-size:12.5px;color:#3b5f25">7</div>
<div class="t" style="left:226px;top:779px;width:174px;height:19px;line-height:19px;text-align:center;font-size:12.5px;color:#3b5f25">Supply Chain Costs</div>
<div class="t" style="left:400px;top:779px;width:59px;height:19px;line-height:19px;text-align:center;font-size:12.5px;color:#000">$</div>
<div style="position:absolute;left:167px;top:796px;width:233px;height:19px;background:#c6e0b4"></div>
<div class="t" style="left:167px;top:798px;width:59px;height:19px;line-height:19px;text-align:center;font-size:12.5px;color:#3b5f25">8</div>
<div class="t" style="left:226px;top:798px;width:174px;height:19px;line-height:19px;text-align:center;font-size:12.5px;color:#3b5f25">Supply Chain Costs / Sales</div>
<div class="t" style="left:400px;top:798px;width:59px;height:19px;line-height:19px;text-align:center;font-size:12.5px;color:#000">%</div>
<div style="position:absolute;left:167px;top:758px;width:293px;height:1px;background:#1e1e1e"></div>
<div style="position:absolute;left:167px;top:777px;width:293px;height:1px;background:#1e1e1e"></div>
<div style="position:absolute;left:167px;top:796px;width:293px;height:1px;background:#1e1e1e"></div>
<div style="position:absolute;left:167px;top:815px;width:293px;height:1px;background:#1e1e1e"></div>
<div style="position:absolute;left:167px;top:834px;width:293px;height:1px;background:#1e1e1e"></div>
<div style="position:absolute;left:167px;top:758px;width:1px;height:85px;background:#1e1e1e"></div>
<div style="position:absolute;left:226px;top:758px;width:1px;height:85px;background:#1e1e1e"></div>
<div style="position:absolute;left:400px;top:758px;width:1px;height:85px;background:#1e1e1e"></div>
<div style="position:absolute;left:459px;top:758px;width:1px;height:85px;background:#1e1e1e"></div>
<div style="position:absolute;left:486px;top:758px;width:269px;height:85px;background:#fff"></div>
<div class="t" style="left:486px;top:760px;width:81px;height:19px;line-height:19px;text-align:center;font-size:12.5px;color:#000">43</div>
<div class="t" style="left:567px;top:760px;width:87px;height:19px;line-height:19px;text-align:center;font-size:12.5px;color:#000">40</div>
<div class="t" style="left:654px;top:760px;width:100px;height:19px;line-height:19px;text-align:center;font-size:12.5px;color:#000">108</div>
<svg style="left:657px;top:760px" width="15" height="17" viewBox="0 0 15 17"><path d="M7.2 0.6 L14.1 6.6 L14.1 11.3 L9.7 7.9 L9.7 15.9 L4.7 15.9 L4.7 7.9 L0.5 11.3 L0.5 6.6 Z" fill="#5da68c" stroke="#3d8c70" stroke-width="0.9" stroke-linejoin="round"/><path d="M7.2 2.5 V15" stroke="#7cc0a6" stroke-width="1.2" opacity="0.6"/></svg>
<div class="t" style="left:486px;top:779px;width:81px;height:19px;line-height:19px;text-align:center;font-size:12.5px;color:#000">47.750</div>
<div class="t" style="left:567px;top:779px;width:87px;height:19px;line-height:19px;text-align:center;font-size:12.5px;color:#000">40.000</div>
<div class="t" style="left:654px;top:779px;width:100px;height:19px;line-height:19px;text-align:center;font-size:12.5px;color:#000">119</div>
<svg style="left:657px;top:779px" width="15" height="17" viewBox="0 0 15 17"><path d="M7.2 0.6 L14.1 6.6 L14.1 11.3 L9.7 7.9 L9.7 15.9 L4.7 15.9 L4.7 7.9 L0.5 11.3 L0.5 6.6 Z" fill="#5da68c" stroke="#3d8c70" stroke-width="0.9" stroke-linejoin="round"/><path d="M7.2 2.5 V15" stroke="#7cc0a6" stroke-width="1.2" opacity="0.6"/></svg>
<div class="t" style="left:486px;top:798px;width:81px;height:19px;line-height:19px;text-align:center;font-size:12.5px;color:#000">0,10</div>
<div class="t" style="left:567px;top:798px;width:87px;height:19px;line-height:19px;text-align:center;font-size:12.5px;color:#000">0,08</div>
<div class="t" style="left:654px;top:798px;width:100px;height:19px;line-height:19px;text-align:center;font-size:12.5px;color:#000">119</div>
<svg style="left:657px;top:798px" width="15" height="17" viewBox="0 0 15 17"><path d="M7.2 0.6 L14.1 6.6 L14.1 11.3 L9.7 7.9 L9.7 15.9 L4.7 15.9 L4.7 7.9 L0.5 11.3 L0.5 6.6 Z" fill="#5da68c" stroke="#3d8c70" stroke-width="0.9" stroke-linejoin="round"/><path d="M7.2 2.5 V15" stroke="#7cc0a6" stroke-width="1.2" opacity="0.6"/></svg>
<div style="position:absolute;left:486px;top:758px;width:269px;height:1px;background:#1e1e1e"></div>
<div style="position:absolute;left:486px;top:777px;width:269px;height:1px;background:#1e1e1e"></div>
<div style="position:absolute;left:486px;top:796px;width:269px;height:1px;background:#1e1e1e"></div>
<div style="position:absolute;left:486px;top:815px;width:269px;height:1px;background:#1e1e1e"></div>
<div style="position:absolute;left:486px;top:834px;width:269px;height:1px;background:#1e1e1e"></div>
<div style="position:absolute;left:486px;top:758px;width:1px;height:85px;background:#1e1e1e"></div>
<div style="position:absolute;left:567px;top:758px;width:1px;height:85px;background:#1e1e1e"></div>
<div style="position:absolute;left:654px;top:758px;width:1px;height:85px;background:#1e1e1e"></div>
<div style="position:absolute;left:754px;top:758px;width:1px;height:85px;background:#1e1e1e"></div>
<div style="position:absolute;left:781px;top:758px;width:271px;height:85px;background:#fff"></div>
<div class="t" style="left:781px;top:760px;width:83px;height:19px;line-height:19px;text-align:center;font-size:12.5px;color:#000">43</div>
<div class="t" style="left:864px;top:760px;width:87px;height:19px;line-height:19px;text-align:center;font-size:12.5px;color:#000">40</div>
<div class="t" style="left:951px;top:760px;width:100px;height:19px;line-height:19px;text-align:center;font-size:12.5px;color:#000">108</div>
<svg style="left:954px;top:760px" width="15" height="17" viewBox="0 0 15 17"><path d="M7.2 0.6 L14.1 6.6 L14.1 11.3 L9.7 7.9 L9.7 15.9 L4.7 15.9 L4.7 7.9 L0.5 11.3 L0.5 6.6 Z" fill="#5da68c" stroke="#3d8c70" stroke-width="0.9" stroke-linejoin="round"/><path d="M7.2 2.5 V15" stroke="#7cc0a6" stroke-width="1.2" opacity="0.6"/></svg>
<div class="t" style="left:781px;top:779px;width:83px;height:19px;line-height:19px;text-align:center;font-size:12.5px;color:#000">47.750</div>
<div class="t" style="left:864px;top:779px;width:87px;height:19px;line-height:19px;text-align:center;font-size:12.5px;color:#000">40.000</div>
<div class="t" style="left:951px;top:779px;width:100px;height:19px;line-height:19px;text-align:center;font-size:12.5px;color:#000">119</div>
<svg style="left:954px;top:779px" width="15" height="17" viewBox="0 0 15 17"><path d="M7.2 0.6 L14.1 6.6 L14.1 11.3 L9.7 7.9 L9.7 15.9 L4.7 15.9 L4.7 7.9 L0.5 11.3 L0.5 6.6 Z" fill="#5da68c" stroke="#3d8c70" stroke-width="0.9" stroke-linejoin="round"/><path d="M7.2 2.5 V15" stroke="#7cc0a6" stroke-width="1.2" opacity="0.6"/></svg>
<div class="t" style="left:781px;top:798px;width:83px;height:19px;line-height:19px;text-align:center;font-size:12.5px;color:#000">0,10</div>
<div class="t" style="left:864px;top:798px;width:87px;height:19px;line-height:19px;text-align:center;font-size:12.5px;color:#000">0,08</div>
<div class="t" style="left:951px;top:798px;width:100px;height:19px;line-height:19px;text-align:center;font-size:12.5px;color:#000">119</div>
<svg style="left:954px;top:798px" width="15" height="17" viewBox="0 0 15 17"><path d="M7.2 0.6 L14.1 6.6 L14.1 11.3 L9.7 7.9 L9.7 15.9 L4.7 15.9 L4.7 7.9 L0.5 11.3 L0.5 6.6 Z" fill="#5da68c" stroke="#3d8c70" stroke-width="0.9" stroke-linejoin="round"/><path d="M7.2 2.5 V15" stroke="#7cc0a6" stroke-width="1.2" opacity="0.6"/></svg>
<div style="position:absolute;left:781px;top:758px;width:271px;height:1px;background:#1e1e1e"></div>
<div style="position:absolute;left:781px;top:777px;width:271px;height:1px;background:#1e1e1e"></div>
<div style="position:absolute;left:781px;top:796px;width:271px;height:1px;background:#1e1e1e"></div>
<div style="position:absolute;left:781px;top:815px;width:271px;height:1px;background:#1e1e1e"></div>
<div style="position:absolute;left:781px;top:834px;width:271px;height:1px;background:#1e1e1e"></div>
<div style="position:absolute;left:781px;top:758px;width:1px;height:85px;background:#1e1e1e"></div>
<div style="position:absolute;left:864px;top:758px;width:1px;height:85px;background:#1e1e1e"></div>
<div style="position:absolute;left:951px;top:758px;width:1px;height:85px;background:#1e1e1e"></div>
<div style="position:absolute;left:1051px;top:758px;width:1px;height:85px;background:#1e1e1e"></div>
<div style="position:absolute;left:1083px;top:317px;width:92px;height:19px;background:#cdd4df"></div>
<div style="position:absolute;left:1175px;top:317px;width:82px;height:19px;background:#fff"></div>
<div class="t" style="left:1083px;top:319px;width:92px;height:19px;line-height:19px;text-align:center;font-size:12.5px;font-weight:bold;color:#000;">Green</div>
<div class="t" style="left:1175px;top:319px;width:82px;height:19px;line-height:19px;text-align:center;font-size:12.5px;color:#000">-</div>
<div style="position:absolute;left:1083px;top:336px;width:92px;height:19px;background:#cdd4df"></div>
<div style="position:absolute;left:1175px;top:336px;width:82px;height:19px;background:#fff"></div>
<div class="t" style="left:1083px;top:338px;width:92px;height:19px;line-height:19px;text-align:center;font-size:12.5px;font-weight:bold;color:#000;">Yellow</div>
<div class="t" style="left:1175px;top:338px;width:82px;height:19px;line-height:19px;text-align:center;font-size:12.5px;color:#000">100</div>
<div style="position:absolute;left:1083px;top:355px;width:92px;height:19px;background:#cdd4df"></div>
<div style="position:absolute;left:1175px;top:355px;width:82px;height:19px;background:#fff"></div>
<div class="t" style="left:1083px;top:357px;width:92px;height:19px;line-height:19px;text-align:center;font-size:12.5px;font-weight:bold;color:#000;">Red</div>
<div class="t" style="left:1175px;top:357px;width:82px;height:19px;line-height:19px;text-align:center;font-size:12.5px;color:#000">80</div>
<div style="position:absolute;left:1083px;top:336px;width:175px;height:1px;background:#1e1e1e"></div>
<div style="position:absolute;left:1083px;top:355px;width:175px;height:1px;background:#1e1e1e"></div>
<div style="position:absolute;left:1083px;top:374px;width:175px;height:1px;background:#1e1e1e"></div>
<div style="position:absolute;left:1083px;top:317px;width:1px;height:58px;background:#1e1e1e"></div>
<div style="position:absolute;left:1175px;top:317px;width:1px;height:58px;background:#1e1e1e"></div>
<div style="position:absolute;left:1257px;top:317px;width:1px;height:58px;background:#1e1e1e"></div>
<div style="position:absolute;left:1084px;top:395px;width:218px;height:246px;background:#d6dce5;box-shadow:0 0 2px 1px rgba(0,0,0,0.32), 1px 1px 2px rgba(0,0,0,0.2)"></div>
<div class="t" style="left:1088px;top:402px;width:100px;height:14px;line-height:14px;text-align:left;font-size:11.5px;color:#1a1a1a;font-style:italic;font-weight:bold;transform:scaleX(0.9);transform-origin:left">DASHBOARD</div>
<div class="t" style="left:1088px;top:436px;width:10px;height:14px;line-height:14px;text-align:left;font-size:11px;color:#222">&#8226;</div>
<div class="t" style="left:1098px;top:436px;width:200px;height:14px;line-height:14px;text-align:left;font-size:11.5px;color:#1a1a1a;font-style:italic;">Choose the month that you would like</div>
<div class="t" style="left:1098px;top:450px;width:200px;height:14px;line-height:14px;text-align:left;font-size:11.5px;color:#1a1a1a;font-style:italic;">to display it's properties from the cell</div>
<div class="t" style="left:1098px;top:463px;width:200px;height:14px;line-height:14px;text-align:left;font-size:11.5px;color:#1a1a1a;font-style:italic;">where blue arrow points.</div>
<div class="t" style="left:1088px;top:482px;width:10px;height:14px;line-height:14px;text-align:left;font-size:11px;color:#222">&#8226;</div>
<div class="t" style="left:1098px;top:482px;width:200px;height:14px;line-height:14px;text-align:left;font-size:11.5px;color:#1a1a1a;font-style:italic;">Once selected the calculations will be</div>
<div class="t" style="left:1098px;top:496px;width:200px;height:14px;line-height:14px;text-align:left;font-size:11.5px;color:#1a1a1a;font-style:italic;">done automatically. The one with the</div>
<div class="t" style="left:1098px;top:509px;width:200px;height:14px;line-height:14px;text-align:left;font-size:11.5px;color:#1a1a1a;font-style:italic;">lower better cases (which you stated in</div>
<div class="t" style="left:1098px;top:523px;width:200px;height:14px;line-height:14px;text-align:left;font-size:11.5px;color:#1a1a1a;font-style:italic;">settings &gt; Metric info section ) will be</div>
<div class="t" style="left:1098px;top:537px;width:200px;height:14px;line-height:14px;text-align:left;font-size:11.5px;color:#1a1a1a;font-style:italic;">calculated distinctively.</div>
<div class="t" style="left:1088px;top:556px;width:10px;height:14px;line-height:14px;text-align:left;font-size:11px;color:#222">&#8226;</div>
<div class="t" style="left:1098px;top:556px;width:200px;height:14px;line-height:14px;text-align:left;font-size:11.5px;color:#1a1a1a;font-style:italic;">You may change the name of the</div>
<div class="t" style="left:1098px;top:569px;width:200px;height:14px;line-height:14px;text-align:left;font-size:11.5px;color:#1a1a1a;font-style:italic;">categories.</div>
<div class="t" style="left:1088px;top:588px;width:10px;height:14px;line-height:14px;text-align:left;font-size:11px;color:#222">&#8226;</div>
<div class="t" style="left:1098px;top:588px;width:200px;height:14px;line-height:14px;text-align:left;font-size:11.5px;color:#1a1a1a;font-style:italic;">If there is no proper format on the cell</div>
<div class="t" style="left:1098px;top:602px;width:200px;height:14px;line-height:14px;text-align:left;font-size:11.5px;color:#1a1a1a;font-style:italic;">you may select the cell and change its</div>
<div class="t" style="left:1098px;top:616px;width:200px;height:14px;line-height:14px;text-align:left;font-size:11.5px;color:#1a1a1a;font-style:italic;">format.</div>
<div style="position:absolute;left:755px;top:213px;width:18px;height:18px;background:#dfe2e6;border:1px solid #b9bcc0"></div>
<svg style="left:760px;top:220px" width="8" height="5" viewBox="0 0 8 5"><path d="M0.5 0.5 H7.5 L4 4.5 Z" fill="#555"/></svg>
<div style="position:absolute;left:567px;top:232px;width:206px;height:51px;background:#fff;border:1px solid #4a4a4a;box-shadow:1px 1px 1px rgba(0,0,0,0.25)"></div>
<div style="position:absolute;left:568px;top:233px;width:204px;height:12px;background:#0078d7"></div>
<div class="t" style="left:571px;top:233px;width:200px;height:12px;line-height:12px;text-align:left;font-size:10.5px;transform:scaleX(0.965);transform-origin:left;color:#fff">According to Monthly Index</div>
<div class="t" style="left:571px;top:246px;width:200px;height:12px;line-height:12px;text-align:left;font-size:10.5px;transform:scaleX(0.965);transform-origin:left;color:#222">According to Cumulative Index</div>
<div class="t" style="left:571px;top:258px;width:200px;height:12px;line-height:12px;text-align:left;font-size:10.5px;transform:scaleX(0.965);transform-origin:left;color:#222">According to Both</div>
<div class="t" style="left:571px;top:271px;width:200px;height:12px;line-height:12px;text-align:left;font-size:10.5px;transform:scaleX(0.965);transform-origin:left;color:#3a1a1a">Do not highligt</div>
<div style="position:absolute;left:1578px;top:156px;width:22px;height:688px;background:#e6e6e6"></div>
<div style="position:absolute;left:1581px;top:157px;width:17px;height:688px;background:#f7f7f7;border-radius:9px"></div>
<svg style="left:1584px;top:161px" width="11" height="8" viewBox="0 0 11 8"><path d="M5.5 0.8 L10.2 7.2 H0.8 Z" fill="#707070" stroke="#707070" stroke-width="0.8" stroke-linejoin="round"/></svg>
<div style="position:absolute;left:1585px;top:174px;width:9px;height:326px;background:#707070;border-radius:4.5px"></div>
<svg style="left:1584px;top:832px" width="11" height="8" viewBox="0 0 11 8"><path d="M5.5 7.2 L10.2 0.8 H0.8 Z" fill="#707070" stroke="#707070" stroke-width="0.8" stroke-linejoin="round"/></svg>
<div style="position:absolute;left:0px;top:843px;width:1600px;height:34px;background:#e6e6e6"></div>
<svg style="left:25px;top:852px" width="8" height="13" viewBox="0 0 8 13"><path d="M6.5 1 L1.5 6.5 L6.5 12" stroke="#444" stroke-width="1.3" fill="none"/></svg>
<svg style="left:59px;top:852px" width="8" height="13" viewBox="0 0 8 13"><path d="M1.5 1 L6.5 6.5 L1.5 12" stroke="#999" stroke-width="1.3" fill="none"/></svg>
<div style="position:absolute;left:91px;top:858px;width:3px;height:3px;background:#333;border-radius:50%"></div>
<div style="position:absolute;left:95.5px;top:858px;width:3px;height:3px;background:#333;border-radius:50%"></div>
<div style="position:absolute;left:100px;top:858px;width:3px;height:3px;background:#333;border-radius:50%"></div>
<div style="position:absolute;left:117px;top:847px;width:127px;height:25px;background:#dae3f3;border-radius:4px"></div>
<div class="t" style="left:117px;top:848px;width:127px;height:25px;line-height:25px;text-align:center;font-size:14.5px;color:#1f1f1f;transform:scaleX(0.97);transform-origin:center;">Target_Database</div>
<div style="position:absolute;left:248px;top:852px;width:1px;height:16px;background:#cfcfcf"></div>
<div style="position:absolute;left:253px;top:847px;width:139px;height:25px;background:#a5a5a5;border-radius:4px"></div>
<div class="t" style="left:253px;top:848px;width:139px;height:25px;line-height:25px;text-align:center;font-size:14.5px;color:#1f1f1f;transform:scaleX(0.97);transform-origin:center;">Cumulative_Actual</div>
<div style="position:absolute;left:397px;top:852px;width:1px;height:16px;background:#cfcfcf"></div>
<div style="position:absolute;left:402px;top:847px;width:140px;height:25px;background:#a5a5a5;border-radius:4px"></div>
<div class="t" style="left:402px;top:848px;width:140px;height:25px;line-height:25px;text-align:center;font-size:14.5px;color:#1f1f1f;transform:scaleX(0.97);transform-origin:center;">Cumulative_Target</div>
<div style="position:absolute;left:546px;top:852px;width:1px;height:16px;background:#cfcfcf"></div>
<div style="position:absolute;left:551px;top:847px;width:119px;height:25px;background:#7030a0;border-radius:4px"></div>
<div class="t" style="left:551px;top:848px;width:119px;height:25px;line-height:25px;text-align:center;font-size:14.5px;color:#1f1f1f;transform:scaleX(0.97);transform-origin:center;color:#fff">Metric_Analysis</div>
<div style="position:absolute;left:675px;top:852px;width:1px;height:16px;background:#cfcfcf"></div>
<div style="position:absolute;left:680px;top:843px;width:116px;height:29px;background:linear-gradient(#fff 40%,#fdf3dc);border-radius:0 0 6px 6px"></div>
<div class="t" style="left:680px;top:846px;width:116px;height:24px;line-height:24px;text-align:center;font-size:14.5px;color:#1f1f1f;transform:scaleX(0.97);transform-origin:center;color:#111;-webkit-text-stroke:0.35px #111">Kpi_Dashboard</div>
<div style="position:absolute;left:688px;top:868px;width:99px;height:2px;background:#107c41"></div>
<div style="position:absolute;left:800px;top:852px;width:1px;height:16px;background:#cfcfcf"></div>
<div class="t" style="left:805px;top:849px;width:44px;height:25px;line-height:25px;text-align:center;font-size:14.5px;color:#1f1f1f;transform:scaleX(0.97);transform-origin:center;color:#333">ToU</div>
<div style="position:absolute;left:853px;top:852px;width:1px;height:16px;background:#cfcfcf"></div>
<svg style="left:896px;top:853px" width="14" height="14" viewBox="0 0 14 14"><path d="M7 1 V13 M1 7 H13" stroke="#888" stroke-width="1.2"/></svg>
<div style="position:absolute;left:962px;top:853.5px;width:3px;height:3px;background:#333;border-radius:50%"></div>
<div style="position:absolute;left:962px;top:858px;width:3px;height:3px;background:#333;border-radius:50%"></div>
<div style="position:absolute;left:962px;top:862.5px;width:3px;height:3px;background:#333;border-radius:50%"></div>
<div style="position:absolute;left:981px;top:851px;width:598px;height:17px;background:#f5f5f5;border-radius:9px"></div>
<svg style="left:984px;top:854px" width="8" height="11" viewBox="0 0 8 11"><path d="M0.8 5.5 L7.2 0.8 V10.2 Z" fill="#707070" stroke="#707070" stroke-width="0.8" stroke-linejoin="round"/></svg>
<div style="position:absolute;left:998px;top:855px;width:334px;height:9px;background:#707070;border-radius:4.5px"></div>
<svg style="left:1566px;top:854px" width="8" height="11" viewBox="0 0 8 11"><path d="M7.2 5.5 L0.8 0.8 V10.2 Z" fill="#707070" stroke="#707070" stroke-width="0.8" stroke-linejoin="round"/></svg>
<div style="position:absolute;left:0px;top:877px;width:1600px;height:23px;background:#f3f3f3"></div>
<div class="t" style="left:7px;top:879px;width:60px;height:21px;line-height:21px;text-align:left;font-size:12px;color:#333;transform:scaleX(0.88);transform-origin:left;">Ready</div>
<svg style="left:58px;top:881px" width="16" height="15" viewBox="0 0 16 15"><rect x="0.6" y="0.6" width="12" height="11" stroke="#555" stroke-width="1" fill="none"/><path d="M0.6 3.5 H12.6 M3 6 H6 M3 8.5 H6" stroke="#555" stroke-width="1"/><circle cx="11.5" cy="10.5" r="3.6" fill="#f3f3f3" stroke="#555" stroke-width="1"/><circle cx="11.5" cy="10.5" r="1.6" fill="#555"/></svg>
<svg style="left:91px;top:879px" width="16" height="17" viewBox="0 0 16 17"><circle cx="7" cy="2.3" r="1.7" stroke="#444" stroke-width="1" fill="none"/><path d="M1 5 Q7 7 13 5 M7 6 V10 L3.5 15.5 M7 10 L9 12" stroke="#444" stroke-width="1.1" fill="none"/><path d="M10 12 L15 16.5 M15 12 L10 16.5" stroke="#444" stroke-width="1.1"/></svg>
<div class="t" style="left:110px;top:879px;width:150px;height:21px;line-height:21px;text-align:left;font-size:12px;color:#333;transform:scaleX(0.88);transform-origin:left;">Accessibility: Investigate</div>
<div style="position:absolute;left:1290px;top:877px;width:42px;height:23px;background:#e0e0e0"></div>
<svg style="left:1303px;top:881px" width="15" height="15" viewBox="0 0 15 15"><rect x="0.5" y="0.5" width="14" height="14" fill="#444"/><path d="M4.7 0 V15 M9.3 0 V15 M0 4.7 H15 M0 9.3 H15" stroke="#e0e0e0" stroke-width="1.3"/></svg>
<svg style="left:1345px;top:881px" width="15" height="15" viewBox="0 0 15 15"><rect x="0.6" y="0.6" width="13.8" height="13.8" stroke="#555" stroke-width="1.1" fill="none"/><rect x="3.5" y="2.5" width="8" height="10" stroke="#555" stroke-width="1" fill="none"/><path d="M5 5 H10 M5 7 H10 M5 9 H10" stroke="#555" stroke-width="0.9"/></svg>
<svg style="left:1386px;top:881px" width="15" height="15" viewBox="0 0 15 15"><rect x="0.6" y="0.6" width="13.8" height="13.8" stroke="#555" stroke-width="1.1" fill="none"/><path d="M5 0.6 V7 H0.6 M9 0.6 V7 H14.4 M5 7 H9" stroke="#555" stroke-width="1.1" fill="none"/></svg>
<div style="position:absolute;left:1421px;top:888px;width:8px;height:1.2px;background:#555"></div>
<div style="position:absolute;left:1434px;top:888px;width:104px;height:1px;background:#777"></div>
<div style="position:absolute;left:1478px;top:882px;width:5px;height:12px;background:#555;border-radius:1px"></div>
<div style="position:absolute;left:1486px;top:884px;width:1px;height:8px;background:#666"></div>
<svg style="left:1542px;top:883px" width="10" height="10" viewBox="0 0 10 10"><path d="M5 0 V10 M0 5 H10" stroke="#555" stroke-width="1.2"/></svg>
<div class="t" style="left:1565px;top:879px;width:30px;height:21px;line-height:21px;text-align:left;font-size:12px;color:#333;transform:scaleX(0.88);transform-origin:left;">%90</div>
</body></html>
